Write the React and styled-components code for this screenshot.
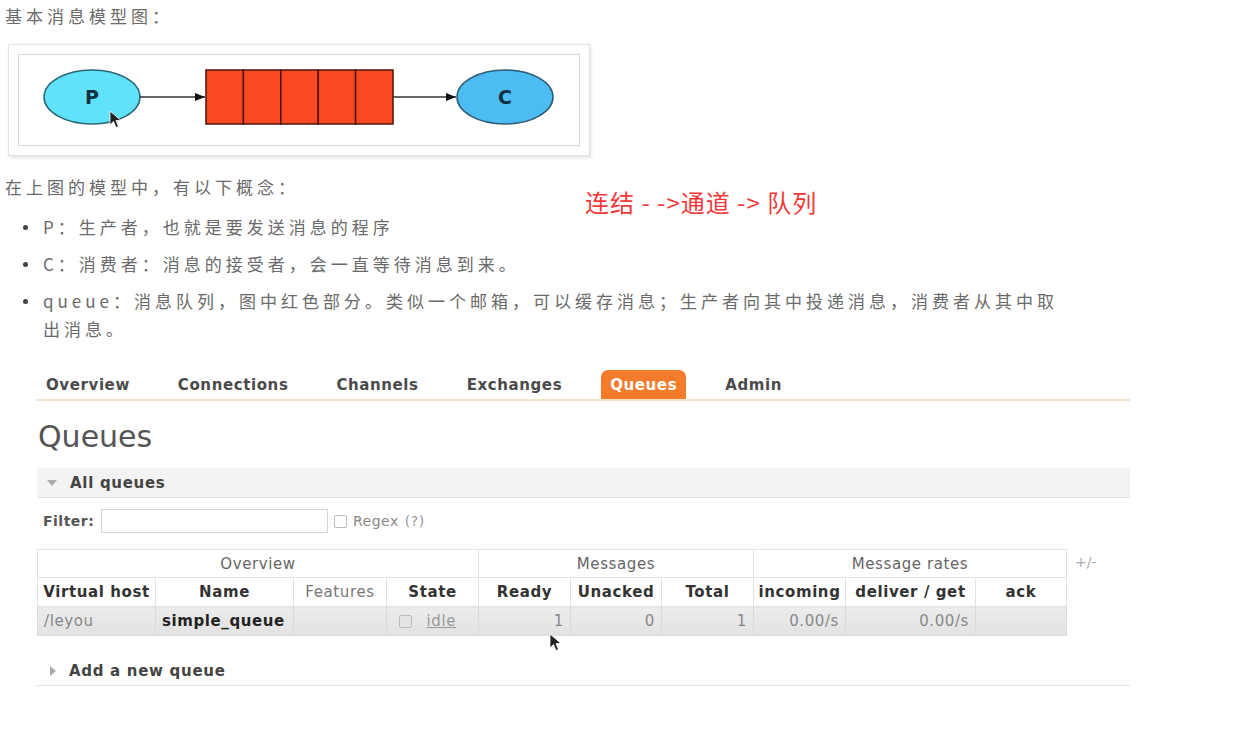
import React from 'react'
import styled, { createGlobalStyle } from 'styled-components'

const GlobalStyle = createGlobalStyle`
  body {
    margin: 0;
    background: #fff;
    font-family: "Noto Sans CJK SC", "Noto Sans", sans-serif;
  }
`

const Page = styled.div`
  position: relative;
  width: 1238px;
  height: 744px;
  overflow: hidden;
`

const Para = styled.p`
  margin: ${p => p.top || 0}px 0 0 5px;
  font-size: 17px;
  letter-spacing: 4px;
  line-height: 20px;
  color: #6a6a6a;
`

const Frame = styled.div`
  margin: 18px 0 0 8px;
  width: 562px;
  padding: 9px;
  border: 1px solid #e2e2e2;
  box-shadow: 1px 2px 4px rgba(0,0,0,0.12);
  background: #fff;
`

const Inner = styled.div`
  border: 1px solid #d8d8d8;
  height: 90px;
`

const Bullets = styled.ul`
  margin: 16px 0 0 0;
  padding: 0 0 0 43px;
  list-style: none;
  width: 1035px;
`

const Bullet = styled.li`
  position: relative;
  font-size: 17px;
  letter-spacing: 4px;
  line-height: 28px;
  color: #6a6a6a;
  margin-bottom: 9px;
  &::before {
    content: '';
    position: absolute;
    left: -20px;
    top: 12px;
    width: 5px;
    height: 5px;
    border-radius: 50%;
    background: #444;
  }
`

const Note = styled.div`
  position: absolute;
  left: 585px;
  top: 186px;
  font-size: 24px;
  letter-spacing: 1px;
  line-height: 32px;
  color: #f03a3a;
`

const Admin = styled.div`
  margin: 27px 0 0 37px;
  width: 1093px;
  font-family: "DejaVu Sans", Verdana, sans-serif;
  color: #444;
`

const Tabs = styled.div`
  display: flex;
  gap: 30px;
  height: 29px;
  border-bottom: 2px solid #f1e3c6;
`

const Tab = styled.div`
  padding: 0 9px;
  font-size: 15px;
  letter-spacing: 0.6px;
  font-weight: bold;
  line-height: 30px;
  border-radius: 7px 7px 0 0;
  color: ${p => (p.active ? '#fff' : '#4a4a4a')};
  background: ${p => (p.active ? '#f47b2a' : 'transparent')};
`

const Heading = styled.h1`
  margin: 19px 0 0 1px;
  font-size: 30px;
  font-weight: normal;
  line-height: 34px;
  color: #555;
`

const SectionBar = styled.div`
  display: flex;
  align-items: center;
  gap: 13px;
  height: 29px;
  padding-left: 9px;
  margin-top: ${p => p.top || 0}px;
  background: ${p => (p.open ? '#f3f3f3' : 'transparent')};
  border-bottom: 1px solid #e4e4e4;
  font-size: 15px;
  letter-spacing: 0.7px;
  font-weight: bold;
  color: #444;
`

const Arrow = styled.span`
  width: 0;
  height: 0;
  ${p =>
    p.open
      ? `border-left: 5px solid transparent; border-right: 5px solid transparent; border-top: 6px solid #aaa; margin-left: 1px;`
      : `border-top: 5px solid transparent; border-bottom: 5px solid transparent; border-left: 6px solid #aaa; margin-left: 4px;`}
`

const FilterRow = styled.div`
  display: flex;
  align-items: center;
  height: 24px;
  margin: 11px 0 0 6px;
  font-size: 14px;
  letter-spacing: 0.5px;
`

const FilterLabel = styled.span`
  font-weight: bold;
  color: #555;
  width: 58px;
`

const FilterInput = styled.div`
  width: 225px;
  height: 22px;
  border: 1px solid #d4d4d4;
  background: #fff;
`

const Check = styled.span`
  width: 11px;
  height: 11px;
  border: 1px solid #bbb;
  border-radius: 2px;
  margin: 0 6px 0 6px;
  background: ${p => p.bg || '#fff'};
`

const Muted = styled.span`
  color: ${p => p.color || '#999'};
  margin-left: ${p => p.gap || 0}px;
`

const TableWrap = styled.div`
  display: flex;
  align-items: flex-start;
  margin-top: 16px;
`

const Table = styled.table`
  border-collapse: collapse;
  table-layout: fixed;
  font-size: 15px;
  letter-spacing: 0.6px;
`

const GroupTh = styled.th`
  height: 27px;
  padding: 0;
  font-weight: normal;
  color: #666;
  border: 1px solid #e3e3e3;
  text-align: center;
`

const Th = styled.th`
  height: 28px;
  padding: 0 4px;
  font-weight: ${p => (p.light ? 'normal' : 'bold')};
  color: ${p => (p.light ? '#777' : '#333')};
  border: 1px solid #e3e3e3;
  text-align: center;
  white-space: nowrap;
  overflow: hidden;
`

const Td = styled.td`
  height: 28px;
  padding: 0 6px;
  border: 1px solid #dadada;
  background: linear-gradient(#ececec, #e2e2e2);
  text-align: ${p => p.align || 'right'};
  font-weight: ${p => (p.bold ? 'bold' : 'normal')};
  color: ${p => (p.bold ? '#222' : '#888')};
  white-space: nowrap;
  overflow: hidden;
`

const StateCell = styled.span`
  display: flex;
  align-items: center;
  justify-content: space-between;
  padding-right: 16px;
`

const Idle = styled.span`
  color: #999;
  text-decoration: underline;
`

const PlusMinus = styled.span`
  margin: 5px 0 0 8px;
  font-size: 14px;
  color: #aaa;
`

const Cursor = styled.svg`
  position: absolute;
  left: ${p => p.x}px;
  top: ${p => p.y}px;
`

const cols = [118, 138, 93, 92, 92, 91, 92, 92, 130, 91]

function Diagram() {
  return (
    <svg width="560" height="90" viewBox="0 0 560 90">
      <defs>
        <marker id="head" markerWidth="10" markerHeight="8" refX="10" refY="4" orient="auto" markerUnits="userSpaceOnUse">
          <path d="M0,0 L10,4 L0,8 Z" fill="#111" />
        </marker>
      </defs>
      <ellipse cx="73" cy="42" rx="48" ry="27" fill="#5fe2fa" stroke="#2d6573" strokeWidth="1.5" />
      <text x="73" y="49" textAnchor="middle" fontFamily="DejaVu Sans, sans-serif" fontWeight="bold" fontSize="19" fill="#103040">P</text>
      <line x1="121" y1="42" x2="186" y2="42" stroke="#333" strokeWidth="1.5" markerEnd="url(#head)" />
      {[0, 1, 2, 3, 4].map(i => (
        <rect key={i} x={187 + i * 37.4} y="15" width="37.4" height="54" fill="#fb4722" stroke="#4a140a" strokeWidth="1.5" />
      ))}
      <line x1="374" y1="42" x2="437" y2="42" stroke="#333" strokeWidth="1.5" markerEnd="url(#head)" />
      <ellipse cx="486" cy="42" rx="48" ry="27" fill="#4cbcf2" stroke="#2d5a73" strokeWidth="1.5" />
      <text x="486" y="49" textAnchor="middle" fontFamily="DejaVu Sans, sans-serif" fontWeight="bold" fontSize="19" fill="#103040">C</text>
    </svg>
  )
}

function Pointer({ x, y }) {
  return (
    <Cursor x={x} y={y} width="14" height="20" viewBox="0 0 14 20">
      <path d="M1,1 L1,15 L4.5,11.5 L7,17.5 L9.5,16.5 L7,10.5 L12,10.5 Z" fill="#222" stroke="#fff" strokeWidth="0.8" />
    </Cursor>
  )
}

export default function App() {
  return (
    <Page>
      <GlobalStyle />
      <Para top={6}>基本消息模型图：</Para>
      <Frame>
        <Inner>
          <Diagram />
        </Inner>
      </Frame>
      <Para top={21}>在上图的模型中，有以下概念：</Para>
      <Bullets>
        <Bullet>P：生产者，也就是要发送消息的程序</Bullet>
        <Bullet>C：消费者：消息的接受者，会一直等待消息到来。</Bullet>
        <Bullet>queue：消息队列，图中红色部分。类似一个邮箱，可以缓存消息；生产者向其中投递消息，消费者从其中取出消息。</Bullet>
      </Bullets>
      <Note>连结 - -&gt;通道 -&gt; 队列</Note>

      <Admin>
        <Tabs>
          <Tab>Overview</Tab>
          <Tab>Connections</Tab>
          <Tab>Channels</Tab>
          <Tab>Exchanges</Tab>
          <Tab active>Queues</Tab>
          <Tab>Admin</Tab>
        </Tabs>
        <Heading>Queues</Heading>
        <SectionBar open top={14}>
          <Arrow open />
          All queues
        </SectionBar>
        <FilterRow>
          <FilterLabel>Filter:</FilterLabel>
          <FilterInput />
          <Check />
          <Muted color="#888">Regex</Muted>
          <Muted gap={6}>(?)</Muted>
        </FilterRow>
        <TableWrap>
          <Table>
            <colgroup>
              {cols.map((w, i) => (
                <col key={i} style={{ width: w }} />
              ))}
            </colgroup>
            <thead>
              <tr>
                <GroupTh colSpan={4}>Overview</GroupTh>
                <GroupTh colSpan={3}>Messages</GroupTh>
                <GroupTh colSpan={3}>Message rates</GroupTh>
              </tr>
              <tr>
                <Th>Virtual host</Th>
                <Th>Name</Th>
                <Th light>Features</Th>
                <Th>State</Th>
                <Th>Ready</Th>
                <Th>Unacked</Th>
                <Th>Total</Th>
                <Th>incoming</Th>
                <Th>deliver / get</Th>
                <Th>ack</Th>
              </tr>
            </thead>
            <tbody>
              <tr>
                <Td align="left">/leyou</Td>
                <Td align="left" bold>simple_queue</Td>
                <Td />
                <Td align="left">
                  <StateCell>
                    <Check bg="#e4e4e4" />
                    <Idle>idle</Idle>
                  </StateCell>
                </Td>
                <Td>1</Td>
                <Td>0</Td>
                <Td>1</Td>
                <Td>0.00/s</Td>
                <Td>0.00/s</Td>
                <Td />
              </tr>
            </tbody>
          </Table>
          <PlusMinus>+/-</PlusMinus>
        </TableWrap>
        <SectionBar top={20}>
          <Arrow />
          Add a new queue
        </SectionBar>
      </Admin>

      <Pointer x={109} y={110} />
      <Pointer x={549} y={633} />
    </Page>
  )
}
